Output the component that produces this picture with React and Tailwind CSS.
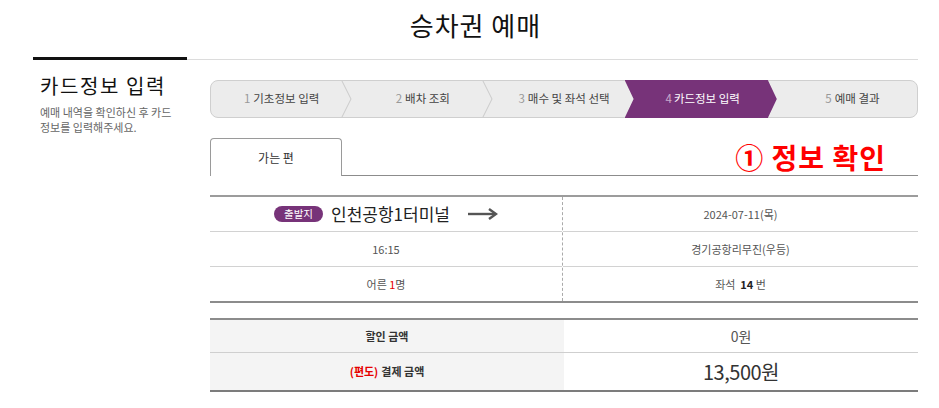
const steps = [
  { n: '1', label: '기초정보 입력' },
  { n: '2', label: '배차 조회' },
  { n: '3', label: '매수 및 좌석 선택' },
  { n: '4', label: '카드정보 입력', active: true },
  { n: '5', label: '예매 결과' },
];

function Chevron() {
  return (
    <svg className="absolute right-0 top-0 h-full w-[11px]" viewBox="0 0 11 38" preserveAspectRatio="none">
      <path d="M1 0 L10 19 L1 38" fill="none" stroke="#c9c9c9" strokeWidth="1" />
    </svg>
  );
}

export default function App() {
  return (
    <div className="w-[939px] h-[408px] bg-white overflow-hidden font-['Noto_Sans_CJK_KR','Noto_Sans',sans-serif]">
      <div className="ml-[33px] w-[885px]">
        {/* 제목 */}
        <div className="h-[57px] pt-[9px] text-center">
          <h1 className="text-[26px] leading-[32px] text-[#111] tracking-[1px]">승차권 예매</h1>
        </div>
        <div className="flex items-start">
          <div className="w-[154px] h-[3px] bg-[#111]" />
          <div className="flex-1 h-px mt-[2px] bg-[#dcdcdc]" />
        </div>

        <div className="flex">
          {/* 왼쪽 */}
          <div className="w-[154px] pl-[7px] pt-[13px]">
            <h2 className="text-[20px] leading-[26px] text-[#111] tracking-[1.6px]">카드정보 입력</h2>
            <p className="mt-[6px] text-[11px] leading-[15px] text-[#666] tracking-[0px]">
              예매 내역을 확인하신 후 카드<br />정보를 입력해주세요.
            </p>
          </div>

          {/* 본문 */}
          <div className="ml-[23px] w-[708px] pt-[20px]">
            <div className="flex h-[38px] rounded-[8px] border border-[#cfcfcf] bg-[#ececec] text-[11.5px] text-[#444]">
              {steps.map((s, i) => (
                <div key={s.n} className="relative flex-1 flex items-center justify-center">
                  {s.active ? (
                    <div className="absolute top-[-1px] bottom-[-1px] left-[-10px] right-[-1px] flex items-center justify-center bg-[#773379] text-white [clip-path:polygon(0_0,calc(100%_-_9px)_0,100%_50%,calc(100%_-_9px)_100%,0_100%,9px_50%)]">
                      <span className="pl-[4px]"><span className="text-[#c9a9cb] mr-[2px]">{s.n}</span>{s.label}</span>
                    </div>
                  ) : (
                    <span className={i === 4 ? 'ml-[12px]' : ''}><span className="text-[#999] mr-[3px]">{s.n}</span>{s.label}</span>
                  )}
                  {i < 2 && <Chevron />}
                </div>
              ))}
            </div>

            {/* 탭 */}
            <div className="mt-[20px] flex items-stretch h-[38px]">
              <div className="w-[132px] rounded-t-[4px] border border-b-0 border-[#9a9a9a] flex items-center justify-center text-[12px] text-[#333]">
                가는 편
              </div>
              <div className="flex-1 border-b border-[#8c8c8c] flex items-center justify-end pr-[32px]">
                <span className="text-[28px] font-bold text-[#ff0000] tracking-[1px] leading-none">① 정보 확인</span>
              </div>
            </div>

            {/* 승차 정보 */}
            <div className="mt-[19px] border-t-2 border-b-2 border-t-[#9c9c9c] border-b-[#8c8c8c] flex text-[11px] text-[#555]">
              <div className="w-[353px] flex flex-col border-r border-dashed border-[#aaa]">
                <div className="h-[35px] flex items-center justify-center gap-[8px] border-b border-solid border-[#d2d2d2]">
                  <span className="h-[16px] px-[10px] rounded-full bg-[#773379] text-white text-[10.5px] leading-[16px]">출발지</span>
                  <span className="text-[17px] text-[#222]">인천공항1터미널</span>
                  <svg className="ml-[10px]" width="30" height="12" viewBox="0 0 30 12">
                    <path d="M0 6 H27" stroke="#555" strokeWidth="2.4" />
                    <path d="M21 1 L28 6 L21 11" fill="none" stroke="#555" strokeWidth="2.4" />
                  </svg>
                </div>
                <div className="h-[35px] flex items-center justify-center border-b border-solid border-[#d2d2d2]">16:15</div>
                <div className="h-[34px] flex items-center justify-center">
                  어른&nbsp;<span className="text-[#e60000]">1</span>명
                </div>
              </div>
              <div className="flex-1 flex flex-col">
                <div className="h-[35px] flex items-center justify-center border-b border-[#d2d2d2]">2024-07-11(목)</div>
                <div className="h-[35px] flex items-center justify-center border-b border-[#d2d2d2]">경기공항리무진(우등)</div>
                <div className="h-[34px] flex items-center justify-center">
                  좌석&nbsp;&nbsp;<span className="font-bold text-[#222]">14</span>&nbsp;번
                </div>
              </div>
            </div>

            {/* 금액 */}
            <div className="mt-[15px] border-t-2 border-b-2 border-t-[#8c8c8c] border-b-[#7c7c7c] grid grid-cols-[354px_1fr]">
              <div className="h-[33px] flex items-center justify-center bg-[#f4f4f4] border-b border-b-[#cfcfcf] text-[11px] font-bold text-[#333]">할인 금액</div>
              <div className="h-[33px] flex items-center justify-center border-b border-b-[#cfcfcf] text-[14px] text-[#555]">0원</div>
              <div className="h-[37px] flex items-center justify-center bg-[#f4f4f4] text-[11px] font-bold text-[#333]">
                <span className="text-[#e60000] mr-[3px]">(편도)</span>결제 금액
              </div>
              <div className="h-[37px] flex items-center justify-center text-[20px] text-[#333] tracking-[-0.5px]">13,500원</div>
            </div>
          </div>
        </div>
      </div>
    </div>
  );
}
